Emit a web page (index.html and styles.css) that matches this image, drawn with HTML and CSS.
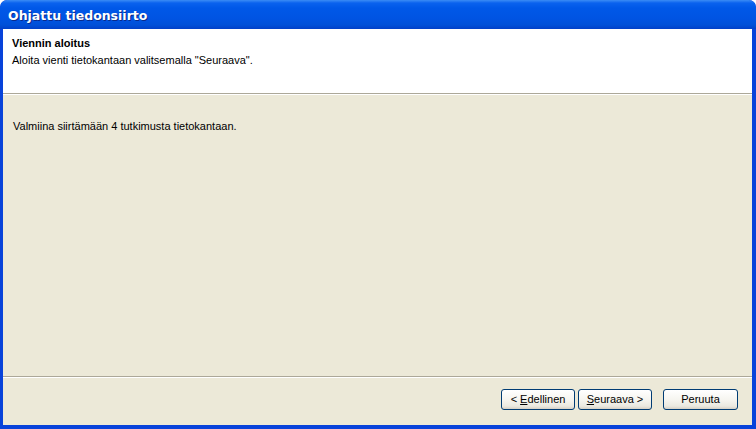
FILE: index.html
```html
<!DOCTYPE html>
<html>
<head>
<meta charset="utf-8">
<link rel="stylesheet" href="styles.css">
</head>
<body>
<div class="window">
  <div class="titlebar"><span class="title">Ohjattu tiedonsiirto</span></div>
  <div class="client">
    <div class="header">
      <div class="h-title">Viennin aloitus</div>
      <div class="h-sub">Aloita vienti tietokantaan valitsemalla "Seuraava".</div>
    </div>
    <div class="content">
      <p class="msg">Valmiina siirtämään 4 tutkimusta tietokantaan.</p>
    </div>
    <div class="footer">
      <button class="btn btn-back">&lt; <u>E</u>dellinen</button>
      <button class="btn btn-next"><u>S</u>euraava &gt;</button>
      <button class="btn btn-cancel">Peruuta</button>
    </div>
  </div>
</div>
</body>
</html>
```
FILE: styles.css
```css
html, body {
  margin: 0;
  padding: 0;
  background: #ffffff;
}
.window {
  width: 756px;
  height: 429px;
  box-sizing: border-box;
  display: flex;
  flex-direction: column;
  background: #0843da;
  border-radius: 7px 7px 0 0;
  padding: 0 4px 4px 3px;
  font-family: "Liberation Sans", Arial, sans-serif;
  font-size: 11px;
  color: #000;
  overflow: hidden;
}
.titlebar {
  height: 29px;
  margin: 0 -4px 0 -3px;
  padding-left: 8px;
  display: flex;
  align-items: center;
  background: linear-gradient(to bottom, #3b8cf5 0px, #0a62ee 3px, #0058e8 8px, #0054e3 18px, #0050d8 25px, #0140c8 29px);
  border-radius: 7px 7px 0 0;
}
.title {
  color: #ffffff;
  font-family: "DejaVu Sans", Verdana, sans-serif;
  font-weight: bold;
  font-size: 12.5px;
  text-shadow: 1px 1px 0 #0a2a8a;
  padding-top: 2px;
}
.client {
  flex: 1;
  display: flex;
  flex-direction: column;
  background: #ece9d8;
}
.header {
  height: 65px;
  box-sizing: border-box;
  background: #ffffff;
  padding: 7px 0 0 9px;
  border-bottom: 1px solid #aca899;
  box-shadow: 0 1px 0 #ffffff;
  margin-bottom: 1px;
}
.h-title {
  font-weight: bold;
  line-height: 14px;
}
.h-sub {
  line-height: 14px;
  margin-top: 3px;
}
.content {
  flex: 1;
  padding: 25px 0 0 10px;
  border-bottom: 1px solid #aca899;
  box-shadow: 0 1px 0 #ffffff;
}
.msg {
  margin: 0;
  line-height: 13px;
}
.footer {
  height: 48px;
  box-sizing: border-box;
  display: flex;
  align-items: flex-start;
  padding: 12px 0 0 498px;
}
.btn {
  height: 21px;
  box-sizing: border-box;
  border: 1px solid #003c74;
  border-radius: 3px;
  background: linear-gradient(to bottom, #ffffff 0%, #f6f5f0 50%, #ebe9e0 85%, #d6d0c5 100%);
  font-family: "Liberation Sans", Arial, sans-serif;
  font-size: 11px;
  color: #000;
  padding: 0;
  margin: 0;
  line-height: 19px;
}
.btn-back { width: 74px; }
.btn-next { width: 74px; margin-left: 3px; }
.btn-cancel { width: 75px; margin-left: 11px; }
```
